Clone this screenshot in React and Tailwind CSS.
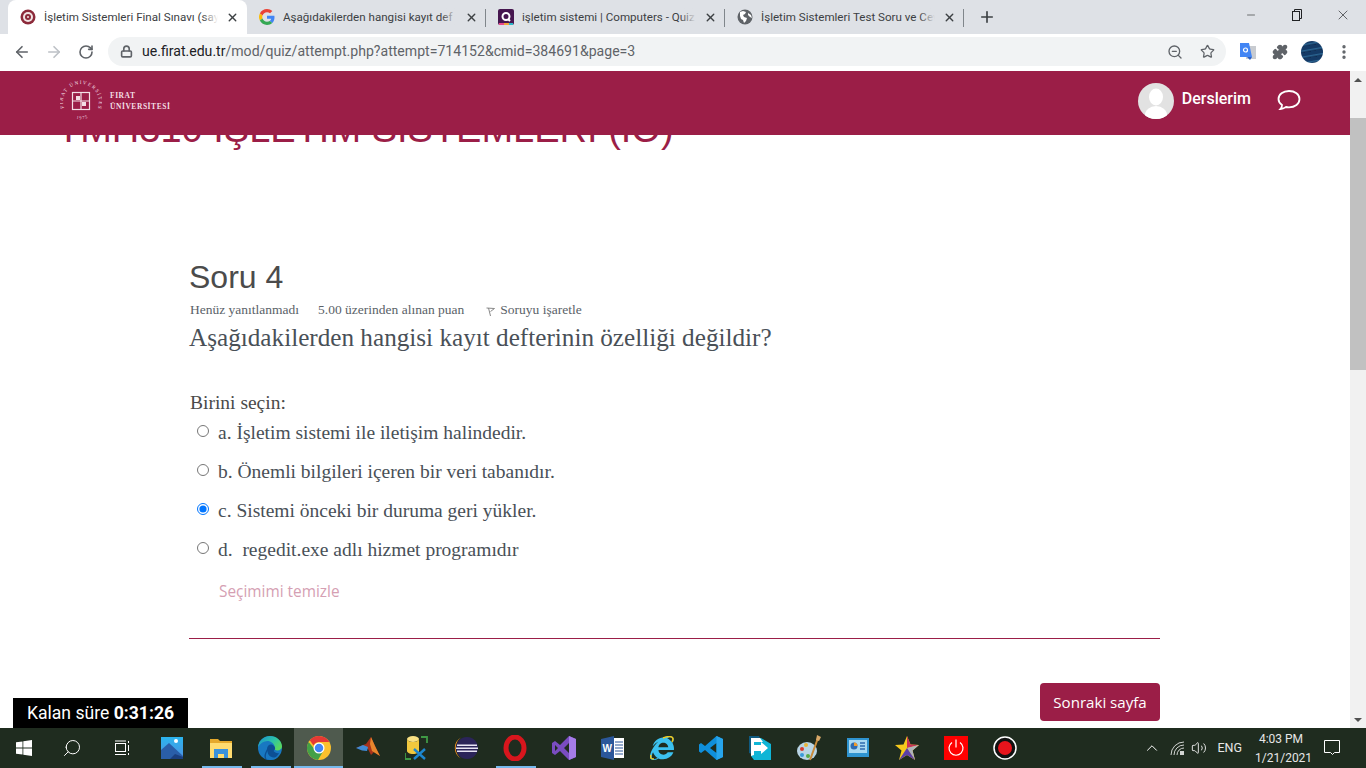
import React from "react";
import { ArrowLeft, ArrowRight, RotateCw, Lock, ZoomOut, Star, Puzzle, MoreVertical, X, Plus, Minus, ChevronUp, Volume2, Search } from "lucide-react";
import { FaInternetExplorer } from "react-icons/fa";

const Tab = ({ icon, title, active, sep }) => (
  <div className={`relative flex h-[34px] w-[239px] shrink-0 items-center pl-[12px] pr-[8px] ${active ? "rounded-t-[8px] bg-white" : ""}`}>
    <div className="mr-[8px] flex h-[16px] w-[16px] shrink-0 items-center justify-center">{icon}</div>
    <div className="relative min-w-0 flex-1 overflow-hidden whitespace-nowrap pt-[1px] text-[11.600px] text-[#3c4043]">
      {title}
      <div className={`absolute inset-y-0 right-0 w-[16px] bg-gradient-to-r from-transparent ${active ? "to-white" : "to-[#dee1e6]"}`} />
    </div>
    <X size={13} strokeWidth={2.5} className="ml-[8px] shrink-0 text-[#3c4043]" />
    {sep && <div className="absolute right-0 top-[9px] h-[18px] w-px bg-[#80868b]" />}
  </div>
);

const TaskItem = ({ children, line, active }) => (
  <div className={`relative flex h-[40px] w-[49px] shrink-0 items-center justify-center ${active ? "bg-[#4f5a4e]" : ""}`}>
    {children}
    {line && <div className={`absolute bottom-0 h-[2px] bg-[#76b9ed] ${active ? "inset-x-0" : "left-[6px] right-[3px]"}`} />}
  </div>
);

const Options = [
  ["a. İşletim sistemi ile iletişim halindedir.", false],
  ["b. Önemli bilgileri içeren bir veri tabanıdır.", false],
  ["c. Sistemi önceki bir duruma geri yükler.", true],
  ["d.  regedit.exe adlı hizmet programıdır", false],
];

export default function App() {
  return (
    <div className="flex h-[768px] w-[1366px] flex-col overflow-hidden bg-white font-['Roboto',sans-serif]">
      {/* tab strip */}
      <div className="flex h-[34px] shrink-0 items-end bg-[#dee1e6] pl-[8px]">
        <Tab active title="İşletim Sistemleri Final Sınavı (say" icon={
          <svg width="16" height="16" viewBox="0 0 16 16"><circle cx="8" cy="8" r="7.500" fill="#8c2a3a"/><circle cx="8" cy="8" r="5" fill="#f0e4e4"/><circle cx="8" cy="8" r="3" fill="#8c2a3a"/><circle cx="8" cy="8" r="1" fill="#f0e4e4"/></svg>
        } />
        <Tab title="Aşağıdakilerden hangisi kayıt def" sep icon={
          <svg width="16" height="16" viewBox="0 0 48 48"><path fill="#EA4335" d="M24 9.500c3.500 0 6.700 1.200 9.200 3.600l6.900-6.900C35.900 2.400 30.500 0 24 0 14.600 0 6.500 5.400 2.600 13.200l8 6.200C12.400 13.700 17.700 9.500 24 9.500z"/><path fill="#4285F4" d="M46.500 24.500c0-1.600-.1-3.100-.4-4.500H24v9h12.700c-.6 2.900-2.200 5.400-4.700 7.100l7.700 6C44.200 37.900 46.500 31.800 46.500 24.500z"/><path fill="#FBBC05" d="M10.500 28.600c-.5-1.400-.8-3-.8-4.600s.3-3.200.8-4.600l-8-6.200C.9 16.500 0 20.100 0 24s.9 7.500 2.600 10.800l7.900-6.200z"/><path fill="#34A853" d="M24 48c6.500 0 11.900-2.100 15.900-5.900l-7.700-6c-2.200 1.400-4.900 2.300-8.200 2.300-6.300 0-11.600-4.200-13.500-9.900l-8 6.200C6.500 42.600 14.600 48 24 48z"/></svg>
        } />
        <Tab title="işletim sistemi | Computers - Quiz" sep icon={
          <svg width="16" height="16" viewBox="0 0 16 16"><rect width="16" height="16" rx="2" fill="#46164f"/><rect x="1" y="14" width="5" height="2" fill="#e8478b"/><rect x="6" y="14" width="5" height="2" fill="#f2a33a"/><rect x="11" y="14" width="4" height="2" fill="#2ab7c9"/><circle cx="8" cy="7.500" r="3.500" fill="none" stroke="#fff" strokeWidth="2"/><path d="M10 10l2 2" stroke="#fff" strokeWidth="2"/></svg>
        } />
        <Tab title="İşletim Sistemleri Test Soru ve Cev" sep icon={
          <svg width="16" height="16" viewBox="0 0 16 16"><circle cx="8" cy="8" r="7.500" fill="#5f6368"/><path d="M3 3l3-1 3 1-1 2-2 1 1 2 3 1-1 3-2 2-1-3-2-1-1-3zM11 4l3 2 1 3-2-1-2-2z" fill="#fff"/></svg>
        } />
        <div className="ml-[6px] flex h-[34px] w-[34px] items-center justify-center"><Plus size={18} strokeWidth={2.2} className="text-[#3c4043]" /></div>
        <div className="flex-1" />
        <div className="flex h-[34px] w-[138px] items-start self-start text-[#202124]">
          <div className="flex h-[30px] w-[46px] items-center justify-center"><Minus size={12} strokeWidth={1.2} /></div>
          <div className="flex h-[30px] w-[46px] items-center justify-center">
            <svg width="10" height="12" viewBox="0 0 10 12" fill="none" stroke="#202124"><rect x="0.500" y="2.500" width="7" height="9" /><path d="M2.500 2.500V0.500H9.500V9.500H7.500" /></svg>
          </div>
          <div className="flex h-[30px] w-[46px] items-center justify-center"><X size={16} strokeWidth={1} /></div>
        </div>
      </div>
      {/* toolbar */}
      <div className="flex h-[37px] shrink-0 items-center bg-white pb-[2px]">
        <div className="flex w-[43px] justify-center pl-[1px]"><ArrowLeft size={18} strokeWidth={2.2} className="text-[#5f6368]" /></div>
        <div className="flex w-[21px] justify-center"><ArrowRight size={18} strokeWidth={2.2} className="text-[#bdc1c6]" /></div>
        <div className="flex w-[44px] justify-center"><RotateCw size={16} strokeWidth={2.4} className="text-[#5f6368]" /></div>
        <div className="flex h-[29px] w-[1118px] items-center rounded-full bg-[#f1f3f4] pl-[12px] pr-[11px]">
          <Lock size={13} strokeWidth={3} className="mr-[9px] text-[#5f6368]" />
          <span className="text-[14.080px] text-[#5f6368]"><span className="text-[#202124]">ue.firat.edu.tr</span>/mod/quiz/attempt.php?attempt=714152&amp;cmid=384691&amp;page=3</span>
          <div className="flex-1" />
          <ZoomOut size={16} strokeWidth={2} className="mr-[17px] text-[#5f6368]" />
          <Star size={15} strokeWidth={2} className="text-[#5f6368]" />
        </div>
        <div className="ml-[14px] flex h-[18px] w-[16px] items-center justify-center">
          <svg width="16" height="18" viewBox="0 0 16 18"><path d="M6 3h10v13H6z" fill="#c8cbd0"/><path d="M0 0h9l3 14H0z" fill="#4285f4"/><path d="M7 14l3 3 2-3z" fill="#2a5fc4"/><circle cx="5.500" cy="7" r="2" fill="none" stroke="#fff" strokeWidth="1.200"/></svg>
        </div>
        <Puzzle size={16} className="ml-[16px] fill-[#5f6368] text-[#5f6368]" />
        <div className="ml-[13px] h-[22px] w-[22px] rounded-full bg-[repeating-linear-gradient(170deg,#143a66_0,#143a66_3px,#2a6491_4px,#0f2c52_6px)]" />
        <div className="ml-[12px] flex justify-center"><MoreVertical size={18} strokeWidth={2.5} className="text-[#5f6368]" /></div>
      </div>
      {/* viewport */}
      <div className="flex min-h-0 flex-1">
        <div className="relative min-w-0 flex-1 overflow-hidden">
          {/* header */}
          <div className="relative z-10 flex h-[64px] items-center bg-[#9b1e47] pb-[4px] text-white">
            <svg width="42" height="42" viewBox="0 0 42 42" className="ml-[60px]" fill="none" stroke="#f3dfe5">
              <defs>
                <path id="logoTop" d="M4 28A18 18 0 1 1 38 28" />
                <path id="logoBot" d="M10 35.500A18 18 0 0 0 32 35.500" />
              </defs>
              <text fontSize="5" fill="#f3dfe5" stroke="none" fontFamily="Liberation Serif" letterSpacing="1.300"><textPath href="#logoTop">FIRAT ÜNİVERSİTESİ</textPath></text>
              <text fontSize="4.500" fill="#f3dfe5" stroke="none" fontFamily="Liberation Serif" letterSpacing="0.800"><textPath href="#logoBot" startOffset="7">1975</textPath></text>
              <rect x="12.500" y="12.500" width="17" height="17" strokeWidth="1.200"/>
              <path d="M21 12.500v17M12.500 21h17" strokeWidth="1.200"/>
              <rect x="16" y="16" width="4" height="4" fill="#f3dfe5" stroke="none"/>
              <rect x="22" y="22" width="4" height="4" fill="#f3dfe5" stroke="none"/>
            </svg>
            <div className="ml-[8px] font-['Liberation_Serif',serif] text-[7.500px] font-bold leading-[11px] tracking-[0.550px] text-[#f3dfe5]">
              <div>FIRAT</div>
              <div>ÜNİVERSİTESİ</div>
            </div>
            <div className="flex-1" />
            <div className="flex h-[36px] w-[36px] items-end justify-center overflow-hidden rounded-full bg-[#e2e2e2]">
              <svg width="36" height="36" viewBox="0 0 36 36" fill="#fff"><ellipse cx="18" cy="14" rx="7" ry="8.500"/><ellipse cx="18" cy="32" rx="11" ry="9"/></svg>
            </div>
            <span className="mb-[4px] ml-[8px] text-[16px] font-medium">Derslerim</span>
            <svg width="24" height="20" viewBox="0 0 24 20" fill="none" stroke="#fff" strokeWidth="1.800" className="mb-[2px] ml-[26px] mr-[49px]"><path d="M12 1C6 1 1.500 4.500 1.500 9c0 2.500 1.400 4.500 3.500 6 0 1.500-.5 3-1.500 4 2 0 4-1 5.500-2 1 .2 2 .3 3 .3 6 0 10.500-3.500 10.500-8.300S18 1 12 1z"/></svg>
          </div>
          {/* course title, scrolled under header */}
          <div className="-mt-[26px] ml-[57px] whitespace-nowrap font-['Liberation_Sans',sans-serif] text-[38px] leading-[40px] text-[#9b1e47]">
            TMH310 İŞLETİM SİSTEMLERİ (İÖ)
          </div>
          <div className="ml-[189px] mr-[190px] mt-[110px] font-['Liberation_Serif',serif] text-[#4a4a4a]">
            <h2 className="font-['Liberation_Sans',sans-serif] text-[32px] leading-[36px] text-[#4b4b4b]">Soru 4</h2>
            <div className="mt-[7px] flex h-[16px] items-center pl-[1px] text-[13.500px] text-[#5a6268]">
              <span>Henüz yanıtlanmadı</span>
              <span className="ml-[19px]">5.00 üzerinden alınan puan</span>
              <svg width="9" height="9" viewBox="0 0 9 9" fill="none" stroke="#888" className="ml-[22px] mr-[5px] mt-[2px]"><path d="M.500 1l8 .5-4 3M2.500 1l2 8"/></svg>
              <span>Soruyu işaretle</span>
            </div>
            <div className="mt-[4px] text-[25.200px] leading-[32px] text-[#495057]">Aşağıdakilerden hangisi kayıt defterinin özelliği değildir?</div>
            <div className="mt-[37px] pl-[1px] text-[19.500px] leading-[24px]">Birini seçin:</div>
            <div className="-mt-[2px]">
              {Options.map(([t, on]) => (
                <div key={t} className="flex h-[39px] items-center pl-[8px] text-[19.500px] text-[#495057]">
                  <input type="radio" readOnly checked={on} className="mr-[9px] h-[12px] w-[12px] -translate-y-[2px] accent-[#0075ff]" />
                  <span className="whitespace-pre">{t}</span>
                </div>
              ))}
            </div>
            <div className="mt-[11px] pl-[30px] font-['Open_Sans',sans-serif] text-[15.400px] leading-[24px] text-[#d59fb3]">Seçimimi temizle</div>
            <div className="mt-[34px] h-px bg-[#9b1e47]" />
            <div className="mt-[44px] flex justify-end">
              <div className="flex h-[38px] w-[120px] items-center justify-center rounded-[4px] bg-[#9b1e47] font-['Open_Sans',sans-serif] text-[15.100px] text-white">Sonraki sayfa</div>
            </div>
          </div>
          <div className="absolute bottom-0 left-[13px] flex h-[30px] w-[175px] items-center justify-center bg-black text-[17.600px] text-white">
            Kalan süre&nbsp;<b>0:31:26</b>
          </div>
        </div>
        {/* scrollbar */}
        <div className="flex w-[16px] shrink-0 flex-col items-center bg-[#f1f1f1]">
          <div className="flex h-[17px] items-center justify-center"><div className="h-0 w-0 border-x-[4px] border-b-[4px] border-x-transparent border-b-[#505050]" /></div>
          <div className="mt-[30px] h-[252px] w-full bg-[#c1c1c1]" />
          <div className="flex-1" />
          <div className="flex h-[17px] items-center justify-center"><div className="h-0 w-0 border-x-[4px] border-t-[4px] border-x-transparent border-t-[#505050]" /></div>
        </div>
      </div>
      {/* taskbar */}
      <div className="flex h-[40px] shrink-0 items-center bg-[#1f2c1f] text-white">
        <div className="flex w-[48px] justify-center">
          <svg width="16" height="16" viewBox="0 0 16 16" fill="#fff"><path d="M0 2.300l6.500-.9v6.200H0zM7.300 1.300L16 0v7.600H7.300zM0 8.400h6.500v6.200L0 13.700zM7.300 8.400H16V16l-8.700-1.300z"/></svg>
        </div>
        <div className="flex w-[48px] justify-center"><Search size={20} strokeWidth={1.2} className="-scale-x-100" /></div>
        <div className="flex w-[51px] justify-center">
          <svg width="16" height="16" viewBox="0 0 16 16" fill="none" stroke="#fff"><rect x="1.500" y="3.500" width="10" height="8"/><path d="M1 1h11M1 14.500h11M14.500 1v2M14.500 5v6M14.500 13v2"/></svg>
        </div>
        <TaskItem>
          <svg width="22" height="22" viewBox="0 0 22 22"><defs><linearGradient id="ph" x1="0" y1="0" x2="0" y2="1"><stop offset="0" stopColor="#2bb5ee"/><stop offset="1" stopColor="#4f8fe0"/></linearGradient></defs><rect width="22" height="22" fill="url(#ph)"/><circle cx="15" cy="4" r="2" fill="#fff"/><path d="M0 22v-9l8-7 14 13v3z" fill="#2a5ea8"/><path d="M9 22l5-5 8 3v2z" fill="#1b3f7e"/></svg>
        </TaskItem>
        <TaskItem line>
          <svg width="22" height="20" viewBox="0 0 22 20"><path d="M0 1h8l2 2h12v17H0z" fill="#e5a92c"/><path d="M0 5h22v15H0z" fill="#ffdc70"/><path d="M4 11h14v9h-4v-4H8v4H4z" fill="#3a92dc"/></svg>
        </TaskItem>
        <TaskItem line>
          <svg width="24" height="24" viewBox="0 0 24 24"><defs><linearGradient id="edg" x1="0" y1="0" x2="1" y2="0.600"><stop offset="0" stopColor="#1a8ed0"/><stop offset="0.600" stopColor="#2cc3a8"/><stop offset="1" stopColor="#58d860"/></linearGradient></defs><circle cx="12" cy="12" r="12" fill="#1878c2"/><path d="M12 0C6 0 1 4 0 11c3-5 8-7 12-5.500 4 1.500 5.500 5 4.500 8 3 2 7.500.5 7.500-3C24 5 18.500 0 12 0z" fill="url(#edg)"/><path d="M9 13c0-4 4-6 7-3 2 2 1 4-.5 5 1 1.500 3.500 2.500 5.500 2-2 4-6 7-10 7-1 0-2-.2-3-.5C5 21 7 17 9 13z" fill="#0c4f94"/><path d="M9.500 15c0 4 3 6.500 7 6.500 1.500 0 3-.5 4.500-1.500-2.500 3-5.500 4-9 4-1 0-2-.2-3-.5-2-2-1-6 .5-8.500z" fill="#1878c2"/></svg>
        </TaskItem>
        <TaskItem line active>
          <svg width="24" height="24" viewBox="0 0 48 48"><circle cx="24" cy="24" r="24" fill="#fbc02d"/><path d="M24 0a24 24 0 0 1 20.800 12H24a12 12 0 0 0-11 7L5.500 8.500A24 24 0 0 1 24 0z" fill="#e53935"/><path d="M3.200 12A24 24 0 0 0 22 48l10-17a12 12 0 0 1-18-6z" fill="#43a047"/><circle cx="24" cy="24" r="11" fill="#fff"/><circle cx="24" cy="24" r="8.500" fill="#4285f4"/></svg>
        </TaskItem>
        <TaskItem>
          <svg width="24" height="22" viewBox="0 0 24 22"><path d="M0 11l7-3 3-1 5-7 4 9 5 10-6-4-3 3-3-6-6-1z" fill="#a8321a"/><path d="M0 11l7-3 5 2-1 4-5-.5z" fill="#3f8ad6"/><path d="M15 0l4 9 5 10-8-5-2-7z" fill="#e8862d"/></svg>
        </TaskItem>
        <TaskItem>
          <svg width="24" height="24" viewBox="0 0 24 24"><ellipse cx="8" cy="3" rx="6" ry="3" fill="#f8e082"/><path d="M2 3v12c0 1.500 2.500 3 6 3s6-1.500 6-3V3c0 1.500-2.500 3-6 3S2 4.500 2 3z" fill="#f1c83e"/><path d="M16 1h6v6M0 17v6h6" fill="none" stroke="#3f9a45" strokeWidth="1.800"/><path d="M9 13l11 10M20 13L9 23" stroke="#1d87d0" strokeWidth="2.400"/></svg>
        </TaskItem>
        <TaskItem>
          <svg width="24" height="24" viewBox="0 0 24 24"><circle cx="13" cy="12" r="11" fill="#2b2459"/><path d="M7 1.500A12 12 0 0 0 7 22.500 13 13 0 0 1 7 1.500z" fill="#f7941e"/><path d="M3 8.500h20V10H3zM2 11.500h22V13H2zM3 14.500h20V16H3z" fill="#e9e6f5"/></svg>
        </TaskItem>
        <TaskItem line>
          <svg width="24" height="26" viewBox="0 0 24 26"><ellipse cx="12" cy="13" rx="9" ry="11" fill="none" stroke="#d8161d" strokeWidth="5"/></svg>
        </TaskItem>
        <TaskItem>
          <svg width="24" height="24" viewBox="0 0 24 24"><path d="M17 0l7 3v18l-7 3-9-9-5 4-3-2V7l3-2 5 4zM17 7l-5 5 5 5zM3 9v6l3-3z" fill="#7a4cc0" fillRule="evenodd"/><path d="M17 0l7 3v18l-7 3z" fill="#a67ce8"/></svg>
        </TaskItem>
        <TaskItem>
          <svg width="24" height="24" viewBox="0 0 24 24"><rect x="7" y="2" width="16" height="20" fill="#fff"/><path d="M14 6h8M14 9h8M14 12h8M14 15h8M14 18h8" stroke="#2b579a"/><path d="M0 3l13-3v24L0 21z" fill="#2b579a"/><text x="1.500" y="15.500" fill="#fff" fontSize="10" fontWeight="700" fontFamily="Liberation Sans">W</text></svg>
        </TaskItem>
        <TaskItem>
          <div className="relative flex h-[24px] w-[24px] items-center justify-center">
            <FaInternetExplorer size={24} className="text-[#3cc1ef]" />
            <svg width="24" height="24" viewBox="0 0 24 24" fill="none" stroke="#f2c81c" strokeWidth="1.500" className="absolute inset-0"><path d="M13 2c5-2 10-2 10 1 0 1-.5 2-1 3M1 19c-1 3 0 4 3 4"/></svg>
          </div>
        </TaskItem>
        <TaskItem>
          <svg width="24" height="24" viewBox="0 0 24 24"><path d="M17.500 0L24 3v18l-6.500 3L6 14l-4 3-2-1.500v-7L2 7l4 3zM17.500 7L11 12l6.500 5z" fill="#0f8fdc" fillRule="evenodd"/><path d="M17.500 0L24 3v18l-6.500 3z" fill="#27a5ec"/></svg>
        </TaskItem>
        <TaskItem>
          <svg width="22" height="24" viewBox="0 0 22 24"><path d="M0 0h10l2 4H3v14l-3-1z" fill="#0f5a80"/><path d="M2 2h10l10 6v16H5l-3-4z" fill="#0fb5d6"/><path d="M2 2h9l3 4H5v13l-3 1z" fill="#fff"/><path d="M5 9h7V6l7 6-7 6v-3H5z" fill="#fff"/></svg>
        </TaskItem>
        <TaskItem>
          <svg width="24" height="26" viewBox="0 0 24 26"><ellipse cx="10" cy="16" rx="10" ry="9" fill="#b8d4e4"/><circle cx="5" cy="14" r="2" fill="#d8392d"/><circle cx="9" cy="10" r="2" fill="#e9b43a"/><circle cx="5" cy="20" r="2" fill="#3a9ad8"/><circle cx="11" cy="21" r="2" fill="#56a845"/><path d="M21 3l-8 22" stroke="#c98a3a" strokeWidth="2"/><path d="M20 0l4 2-2 4-3-1z" fill="#d8a868"/></svg>
        </TaskItem>
        <TaskItem>
          <svg width="22" height="20" viewBox="0 0 22 20"><rect width="22" height="19" fill="#2f94d0"/><rect x="2" y="2" width="18" height="13" fill="#a8d9f2"/><circle cx="7" cy="8" r="3.500" fill="#2f6bb0"/><path d="M7 8V4.500A3.500 3.500 0 0 1 10.500 8z" fill="#f09a2a"/><path d="M13 5h5M13 8h5M13 11h5" stroke="#2f6bb0" strokeWidth="1.500"/></svg>
        </TaskItem>
        <TaskItem>
          <svg width="24" height="24" viewBox="0 0 24 24"><path d="M12 0l3.500 8.500L24 9l-6.500 5.500L20 24l-8-5-8 5 2.500-9.500L0 9l8.500-.5z" fill="#f6c91c"/><path d="M12 0l3.500 8.500L24 9l-12 3z" fill="#c8325a"/><path d="M12 12l8 12 -2.500-9.500L24 9z" fill="#aeb4bc"/><path d="M12 12l-8 12 8-5 8 5z" fill="#5b3fa8"/></svg>
        </TaskItem>
        <TaskItem>
          <div className="flex h-[24px] w-[24px] items-center justify-center bg-[#ff0000]"><svg width="18" height="18" viewBox="0 0 18 18" fill="none" stroke="#fff" strokeWidth="1.200"><path d="M5 3.500a7 7 0 1 0 8 0M9 0.500v8"/></svg></div>
        </TaskItem>
        <TaskItem>
          <svg width="24" height="24" viewBox="0 0 24 24"><circle cx="12" cy="12" r="11" fill="#111" stroke="#fff" strokeWidth="1.500"/><circle cx="12" cy="12" r="7" fill="#e8141c"/></svg>
        </TaskItem>
        <div className="flex-1" />
        <ChevronUp size={18} strokeWidth={1.3} className="mr-[8px]" />
        <svg width="16" height="16" viewBox="0 0 16 16" fill="none" stroke="#fff" className="mr-[6px] opacity-80"><path d="M2 15A13 13 0 0 1 15 2M5 15A10 10 0 0 1 15 5M8 15a7 7 0 0 1 7-7" /><rect x="11" y="11" width="4" height="4" fill="#fff" stroke="none"/></svg>
        <Volume2 size={16} strokeWidth={1.3} className="mr-[10px]" />
        <span className="mr-[13px] text-[12.500px] text-[#e6e6e6]">ENG</span>
        <div className="w-[52px] text-center text-[12px] text-[#e6e6e6]">
          <div className="-mb-[1px] leading-[20px]">4:03 PM</div>
          <div className="leading-[20px]">1/21/2021</div>
        </div>
        <div className="ml-[17px] mr-[26px]">
          <svg width="16" height="16" viewBox="0 0 16 16" fill="none" stroke="#fff"><path d="M.500.500h15v12h-5l-2 2-2-2h-6z"/></svg>
        </div>
      </div>
    </div>
  );
}
